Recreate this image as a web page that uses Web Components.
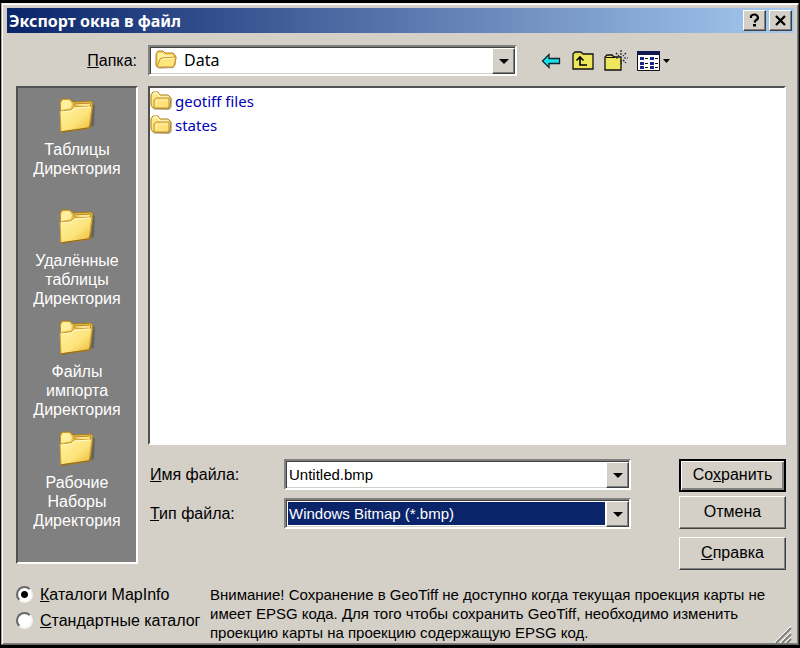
<!DOCTYPE html>
<html lang="ru">
<head>
<meta charset="utf-8">
<title>Экспорт окна в файл</title>
<style>
  body {
    margin: 0;
    background: #000;
    color: #000;
    font: 16px/19px "Liberation Sans", Arial, sans-serif;
    --face: #d4d0c8;
    --shade: #808080;
    --dark: #404040;
    --navy: #0a246a;
  }
</style>
</head>
<body>
<export-dialog></export-dialog>

<template id="folder-icon-t">
  <style>
    :host { display: block; flex: none; width: 22px; height: 20px; }
    :host([kind="place"]) { width: 36px; height: 36px; }
    svg { display: none; width: 100%; height: 100%; }
    :host([kind="place"]) .place, :host([kind="open"]) .open, :host([kind="small"]) .small { display: block; }
  </style>
  <svg class="place" viewBox="0 0 36 36" aria-hidden="true">
    <defs>
      <linearGradient id="g1" x1="0" y1="0" x2="1" y2="1"><stop offset="0" stop-color="#fff3a4"/><stop offset=".55" stop-color="#fde47c"/><stop offset="1" stop-color="#e9b62f"/></linearGradient>
    </defs>
    <path d="M3 35 35 28 36 7 32 5Z" fill="#4b4b42" opacity=".5"/>
    <path d="M1 4 3 1 11 1 14 4 32 3 34 5 31 30 2 34Z" fill="#e7bd46" stroke="#a87e20"/>
    <path d="M2 5 4 2 10 2 13 6 12 10 2 12Z" fill="#fff0a0"/>
    <path d="M15 6 32 5 31 9 16 8Z" fill="#ffe88c" stroke="#b48a2c"/>
    <path d="M1 13 12 12 15 9 33 8 30 30 2 34Z" fill="url(#g1)" stroke="#d2a235"/>
    <path d="M3 14 12 13 16 10 31 9" fill="none" stroke="#fffbd0"/>
    <path d="M2 34 30 30 32 26" fill="none" stroke="#98701c" stroke-width="1.3"/>
  </svg>
  <svg class="open" viewBox="0 0 22 20" aria-hidden="true">
    <path d="M3 19 19 18 22 7 20 5Z" fill="#999" opacity=".6"/>
    <path d="M1 4 3 1 8 1 10 3 18 3 20 5 20 15 18 17 2 17 1 15Z" fill="#f6d45e" stroke="#a97f21"/>
    <path d="M3 4 4 3 8 3 10 5 17 5 18 7 6 8 3 13Z" fill="#fff0a3"/>
    <path d="M2 17 5 9 7 8 21 7 19 16 17 17Z" fill="#ffe67a" stroke="#c49429"/>
    <path d="M6 10 8 9 19 8" fill="none" stroke="#fff9cb"/>
  </svg>
  <svg class="small" viewBox="0 0 22 20" aria-hidden="true">
    <path d="M3 19 20 19 22 16 22 8 20 5Z" fill="#999" opacity=".6"/>
    <path d="M1 4 3 1 8 1 10 4 18 4 21 7 20 16 18 18 3 17 1 14Z" fill="#ffe783" stroke="#a97f21"/>
    <path d="M3 4 4 2 7 2 10 6 18 6" fill="none" stroke="#fff8c0" stroke-width="1.5"/>
    <path d="M4 16 4 9 6 7 19 7 19 16 17 17 5 17Z" fill="#ffe27a" stroke="#c08d26"/>
    <path d="M6 15 6 10 18 9" fill="none" stroke="#fff7bd"/>
  </svg>
</template>

<template id="title-bar-t">
  <style>
    :host { display: flex; align-items: center; gap: 3px; height: 25px; padding: 0 2px;
      background: linear-gradient(90deg, #0a246a, #a6caf0); color: #fff; }
    h1 { flex: 1; margin: 0; font: bold 16px/24px "Noto Sans", "Open Sans", sans-serif; white-space: nowrap; }
    button { display: grid; place-items: center; width: 23px; height: 21px; padding: 0; background: var(--face); color: #000;
      border: 1px solid; border-color: #fff var(--dark) var(--dark) #fff; box-shadow: inset -1px -1px var(--shade); border-radius: 0; }
    svg { width: 15px; height: 15px; display: block; }
  </style>
  <h1><slot></slot></h1>
  <button aria-label="Справка"><svg viewBox="0 0 15 15"><path d="M4 5V3Q5 1.500 7.500 1.500T11 4.500Q11 6.500 8.500 7.500L7.500 9.500" fill="none" stroke="#000" stroke-width="2.200"/><path d="M6 11h3v2.500H6z"/></svg></button>
  <button aria-label="Закрыть"><svg viewBox="0 0 15 15"><path d="M3 3 12 12M12 3 3 12" stroke="#000" stroke-width="2.300"/></svg></button>
</template>

<template id="combo-field-t">
  <style>
    :host { display: flex; align-items: center; }
    label { flex: none; width: var(--label-width, 134px); text-align: var(--label-align, left); }
    .box { position: relative; flex: 1; display: flex; align-items: stretch; min-width: 0; height: 31px; box-sizing: border-box;
      background: #fff; border: 2px solid; border-color: var(--shade) #fff #fff var(--shade);
      box-shadow: inset 1px 1px var(--dark), inset -1px -1px var(--face); padding: 1px; }
    input, select { flex: 1; min-width: 0; margin: 1px; padding: 0 1px; border: 0; border-radius: 0; outline: 0; appearance: none;
      background: transparent; color: #000; font: inherit; font-size: 15px; }
    select { padding-right: 24px; margin-right: 0; }
    :host([selected]) select { color: #fff; background: linear-gradient(var(--navy), var(--navy)) left / calc(100% - 23px) 100% no-repeat; }
    :host([folder]) select { padding-left: 32px; font: 16px/19px "Noto Sans", sans-serif; }
    .arrow { position: absolute; right: 0; top: 1px; bottom: 0; width: 23px; padding: 0; box-sizing: border-box; display: grid; place-items: center;
      background: var(--face); border: 1px solid; border-color: #fff var(--dark) var(--dark) #fff; box-shadow: inset -1px -1px var(--shade); pointer-events: none; }
    .arrow svg { width: 10px; height: 5px; display: block; }
    ::slotted(folder-icon) { position: absolute; left: 5px; top: 3px; }
  </style>
  <label for="control"><slot name="label"></slot></label>
  <div class="box"><slot name="icon"></slot><span class="arrow"><svg viewBox="0 0 10 5"><path d="M0 0H10L5 5Z"/></svg></span></div>
</template>

<template id="place-item-t">
  <style>
    :host { display: block; height: 111px; }
    button { display: flex; flex-direction: column; align-items: center; gap: 6px; width: 100%; padding: 0; border: 0; background: none; color: #fff;
      font: inherit; text-align: center; }
  </style>
  <button><folder-icon kind="place"></folder-icon><span><slot></slot></span></button>
</template>

<template id="file-item-t">
  <style>
    :host { display: flex; height: 24px; }
    a { display: flex; align-items: center; gap: 3px; color: #0000b4; text-decoration: none; font: 15px/20px "Noto Sans", sans-serif; }
  </style>
  <a href="#"><folder-icon kind="small"></folder-icon><slot></slot></a>
</template>

<template id="push-button-t">
  <style>
    :host { display: block; }
    button { display: block; width: 100%; height: 33px; padding: 0 0 2px; border-radius: 0; background: var(--face); color: #000; font: inherit;
      border: 1px solid; border-color: #fff var(--dark) var(--dark) #fff; box-shadow: inset -1px -1px var(--shade); }
    :host([primary]) button { border: 2px solid #000; box-shadow: inset 1px 1px #fff, inset -2px -2px var(--shade); }
  </style>
  <button><slot></slot></button>
</template>

<template id="tool-bar-t">
  <style>
    :host { display: flex; align-items: center; }
    button { display: block; padding: 0; border: 0; background: none; }
    svg { display: block; height: 24px; }
    .back { width: 20px; margin-right: 11px; }
    .up { width: 22px; margin-right: 10px; }
    .new { width: 25px; margin-right: 8px; }
    .view { width: 34px; }
  </style>
  <button class="back" aria-label="Назад"><svg viewBox="0 0 20 24"><path d="M1.500 12 8 5.500V9.500H18.500V14.500H8V18.500Z" fill="#18e0e4" stroke="#123" stroke-width="1.300"/></svg></button>
  <button class="up" aria-label="На уровень вверх"><svg viewBox="0 0 22 24"><path d="M1 20V5L3 3H9L11 5H21V20Z" fill="#eee75e" stroke="#111" stroke-width="1.300"/><path d="M3 5H9" stroke="#d9cf70"/><path d="M8 9V16H15M4.500 11.500 8 8 11.500 11.500" fill="none" stroke="#000" stroke-width="1.600"/></svg></button>
  <button class="new" aria-label="Новая папка"><svg viewBox="0 0 25 24"><path d="M1 21V8L3 6H8L10 8H17V21Z" fill="#eee75e" stroke="#111" stroke-width="1.300"/><path d="M2 8.500H11" stroke="#111"/><path d="M17 1V6M17 11V15M12 9H15M20 9H24M12 4 15 7M22 4 19 7M19 11 22 14" stroke="#222" stroke-width="1.200" stroke-dasharray="2 1"/></svg></button>
  <button class="view" aria-label="Вид"><svg viewBox="0 0 34 24"><path d="M.5 2.500H22.500V21.500H.5Z" fill="#fff" stroke="#111"/><path d="M0 2H23V6H0Z" fill="#101850"/><g fill="#1c2588"><path d="M3 8h4v3H3zM3 13h4v3H3zM3 17h4v3H3zM13 8h4v3h-4zM13 13h4v3h-4zM13 17h4v3h-4z"/></g><path d="M8 9.500H11M8 14.500H11M8 18.500H11M18 9.500H21M18 14.500H21M18 18.500H21" stroke="#111" stroke-width="1.200"/><path d="M26 10H33L29.500 14Z"/></svg></button>
</template>

<template id="catalog-choice-t">
  <style>
    :host { display: flex; flex-direction: column; gap: 7px; }
    label { display: flex; align-items: center; gap: 7px; white-space: nowrap; }
    input { appearance: none; flex: none; width: 17px; height: 17px; margin: 0; border-radius: 50%; background: #fff; border: 2px solid;
      border-color: #686868 #f4f4f0 #f4f4f0 #686868; }
    input:checked { background: radial-gradient(circle, #000 0 3px, #fff 4px); }
  </style>
  <label><input type="radio" name="catalog" checked><span><u>К</u>аталоги MapInfo</span></label>
  <label><input type="radio" name="catalog"><span><u>С</u>тандартные каталог</span></label>
</template>

<template id="export-dialog-t">
  <style>
    :host { display: flex; flex-direction: column; box-sizing: border-box; min-height: 100vh; padding: 3px 1px 3px 1px; background: #000; }
    .frame { flex: 1; display: flex; flex-direction: column; padding: 4px 4px 0 5px; background: var(--face);
      border: 1px solid; border-color: #eeece6 #484848 #686868 #a8a6a0; box-shadow: inset 1px 1px #fff, inset -1px -1px #808080; }
    .body { flex: 1; display: flex; flex-direction: column; padding: 12px 8px 2px 9px; }
    .top { display: grid; grid-template-columns: 1fr 269px; padding-bottom: 10px; }
    .top combo-field { --label-width: 121px; --label-align: right; column-gap: 11px; }
    tool-bar { padding-left: 24px; }
    .main { flex: 1; display: grid; grid-template-columns: 122px 1fr; gap: 10px; }
    nav { margin-bottom: 6px; border: 2px solid; border-color: #505050 #fff #fff #505050; background: #808080; padding-top: 10px; box-sizing: border-box; }
    .right { display: flex; flex-direction: column; min-width: 0; }
    .files { flex: 1; min-height: 160px; padding: 1px 0 0; border: 2px solid; border-color: #505050 #fff #fff #505050; background: #fff; }
    .bottom { display: grid; grid-template-columns: 1fr 107px; gap: 48px; padding: 14px 0 0 2px; }
    .fields { display: flex; flex-direction: column; gap: 8px; }
    .buttons { display: flex; flex-direction: column; gap: 4px; }
    .buttons push-button:last-child { padding-top: 4px; }
    footer { position: relative; display: grid; grid-template-columns: 184px 1fr; gap: 10px; padding-top: 15px; }
    p { margin: 0; font-size: 15px; }
    .grip { position: absolute; right: -6px; bottom: -2px; width: 18px; height: 18px; }
  </style>
  <div class="frame">
    <title-bar>Экспорт окна в файл</title-bar>
    <div class="body">
      <div class="top">
        <combo-field kind="select" value="Data" folder><span slot="label"><u>П</u>апка:</span><folder-icon slot="icon" kind="open"></folder-icon></combo-field>
        <tool-bar></tool-bar>
      </div>
      <div class="main">
        <nav>
          <place-item>Таблицы<br>Директория</place-item>
          <place-item>Удалённые<br>таблицы<br>Директория</place-item>
          <place-item>Файлы<br>импорта<br>Директория</place-item>
          <place-item>Рабочие<br>Наборы<br>Директория</place-item>
        </nav>
        <div class="right">
          <div class="files"><file-item>geotiff files</file-item><file-item>states</file-item></div>
          <div class="bottom">
            <div class="fields">
              <combo-field kind="input" value="Untitled.bmp"><span slot="label"><u>И</u>мя файла:</span></combo-field>
              <combo-field kind="select" value="Windows Bitmap (*.bmp)" selected><span slot="label"><u>Т</u>ип файла:</span></combo-field>
            </div>
            <div class="buttons">
              <push-button primary>Со<u>х</u>ранить</push-button>
              <push-button>Отмена</push-button>
              <push-button><u>С</u>правка</push-button>
            </div>
          </div>
        </div>
      </div>
      <footer>
        <catalog-choice></catalog-choice>
        <p>Внимание! Сохранение в GeoTiff не доступно когда текущая проекция карты не имеет EPSG кода. Для того чтобы сохранить GeoTiff, необходимо изменить проекцию карты на проекцию содержащую EPSG код.</p>
        <svg class="grip" viewBox="0 0 18 18" aria-hidden="true"><path d="M2 17 17 2M8 17 17 8M13 17 17 13" stroke="#808080" stroke-width="2"/><path d="M0 17 17 0M6 17 17 6M11 17 17 11" stroke="#fff"/></svg>
      </footer>
    </div>
  </div>
</template>

<script>
  class TemplateElement extends HTMLElement {
    constructor() {
      super();
      this.attachShadow({ mode: "open" })
        .append(document.getElementById(this.localName + "-t").content.cloneNode(true));
    }
  }

  class ComboField extends TemplateElement {
    connectedCallback() {
      if (this.shadowRoot.getElementById("control")) return;
      const value = this.getAttribute("value");
      const control = document.createElement(this.getAttribute("kind"));
      control.id = "control";
      if (control.localName === "select") control.add(new Option(value));
      else { control.type = "text"; control.value = value; }
      this.shadowRoot.querySelector(".arrow").before(control);
    }
  }

  customElements.define("folder-icon", class extends TemplateElement {});
  customElements.define("title-bar", class extends TemplateElement {});
  customElements.define("combo-field", ComboField);
  customElements.define("place-item", class extends TemplateElement {});
  customElements.define("file-item", class extends TemplateElement {});
  customElements.define("push-button", class extends TemplateElement {});
  customElements.define("tool-bar", class extends TemplateElement {});
  customElements.define("catalog-choice", class extends TemplateElement {});
  customElements.define("export-dialog", class extends TemplateElement {});
</script>
</body>
</html>
